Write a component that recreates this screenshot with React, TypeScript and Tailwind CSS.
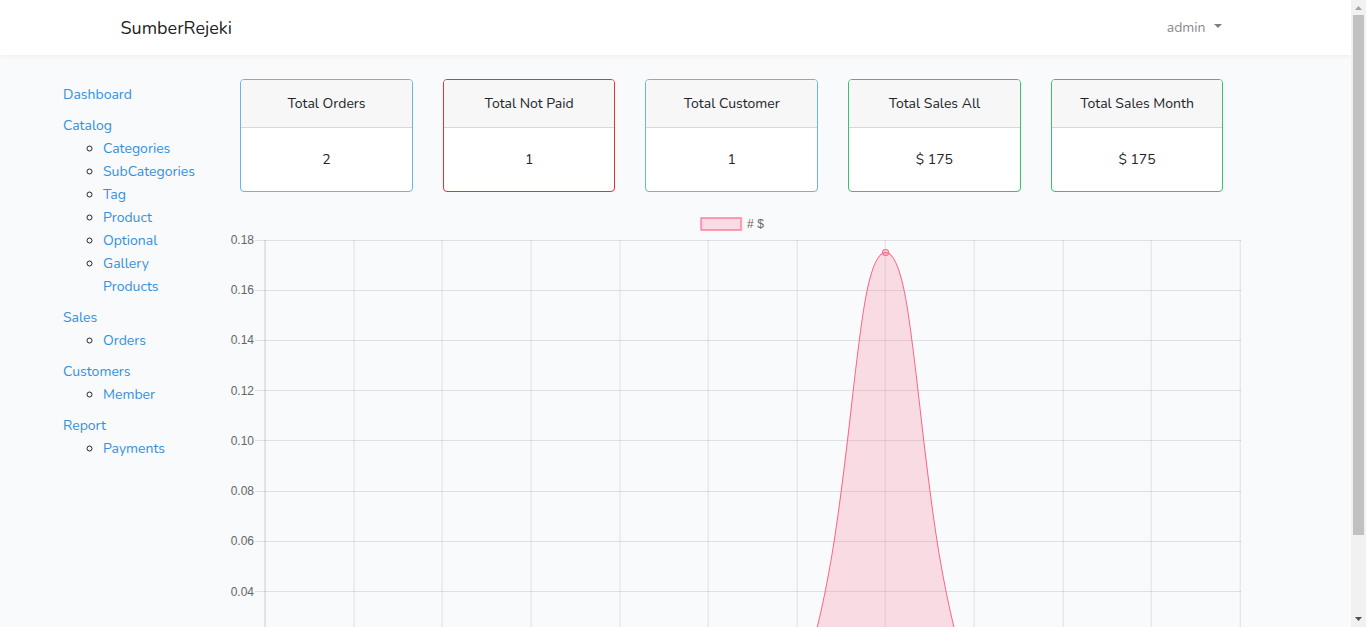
type Section = { title: string; items: string[] };

const sections: Section[] = [
  { title: "Dashboard", items: [] },
  {
    title: "Catalog",
    items: ["Categories", "SubCategories", "Tag", "Product", "Optional", "Gallery Products"],
  },
  { title: "Sales", items: ["Orders"] },
  { title: "Customers", items: ["Member"] },
  { title: "Report", items: ["Payments"] },
];

const stats = [
  { title: "Total Orders", value: "2", border: "border-[#6cb2eb]" },
  { title: "Total Not Paid", value: "1", border: "border-[#e3342f]" },
  { title: "Total Customer", value: "1", border: "border-[#6cb2eb]" },
  { title: "Total Sales All", value: "$ 175", border: "border-[#38c172]" },
  { title: "Total Sales Month", value: "$ 175", border: "border-[#38c172]" },
];

function Navbar() {
  return (
    <header className="relative h-[55px] bg-white shadow-[0_2px_4px_rgba(0,0,0,0.04)]">
      <div className="mx-auto flex h-full max-w-[1140px] items-center justify-between px-[15px]">
        <a href="#" className="text-lg text-black/90">
          SumberRejeki
        </a>
        <button type="button" className="mr-[9px] flex items-center gap-2 text-sm text-black/50">
          admin
          <span className="mb-1 border-x-4 border-t-4 border-x-transparent border-t-black/50" />
        </button>
      </div>
    </header>
  );
}

function Sidebar() {
  return (
    <nav className="w-1/6 shrink-0 pl-[63px] pr-5 pt-1 text-sm leading-[23px]">
      <ul className="flex flex-col gap-2">
        {sections.map((section) => (
          <li key={section.title}>
            <a href="#" className="text-[#3490dc]">
              {section.title}
            </a>
            {section.items.length > 0 && (
              <ul className="list-[circle] pl-10">
                {section.items.map((item) => (
                  <li key={item}>
                    <a href="#" className="text-[#3490dc]">
                      {item}
                    </a>
                  </li>
                ))}
              </ul>
            )}
          </li>
        ))}
      </ul>
    </nav>
  );
}

function StatCard({ title, value, border }: { title: string; value: string; border: string }) {
  return (
    <section className={`rounded border bg-white text-center text-sm leading-[23px] ${border}`}>
      <h2 className="rounded-t-[3px] border-b border-black/[0.125] bg-[#f7f7f7] py-3">{title}</h2>
      <p className="p-5">{value}</p>
    </section>
  );
}

const plot = { left: 40, right: 1015, top: 32, bottom: 484 };
const columns = 11;
const maxValue = 0.18;
const tickStep = 0.02;
const values = [0, 0, 0, 0, 0, 0, 0, 0.175, 0, 0, 0, 0];
const ticks = Array.from({ length: 10 }, (_, i) => maxValue - i * tickStep);

const xAt = (i: number) => plot.left + ((plot.right - plot.left) * i) / columns;
const yAt = (v: number) => plot.bottom - ((plot.bottom - plot.top) * v) / maxValue;
const snap = (n: number) => Math.floor(n) + 0.5;

/* Spline with tension 0.4; control points are clamped to the plot area. */
function splinePath() {
  const pts = values.map((v, i) => ({ x: xAt(i), y: yAt(v) }));
  const clampY = (y: number) => Math.min(plot.bottom, Math.max(plot.top, y));
  const controls = pts.map((p, i) => {
    const prev = pts[i - 1] ?? p;
    const next = pts[i + 1] ?? p;
    const d1 = Math.hypot(p.x - prev.x, p.y - prev.y);
    const d2 = Math.hypot(next.x - p.x, next.y - p.y);
    const a = (0.4 * d1) / (d1 + d2);
    const b = (0.4 * d2) / (d1 + d2);
    return {
      inX: p.x - a * (next.x - prev.x),
      inY: clampY(p.y - a * (next.y - prev.y)),
      outX: p.x + b * (next.x - prev.x),
      outY: clampY(p.y + b * (next.y - prev.y)),
    };
  });
  return pts
    .map((p, i) =>
      i === 0
        ? `M${p.x} ${p.y}`
        : `C${controls[i - 1].outX} ${controls[i - 1].outY} ${controls[i].inX} ${controls[i].inY} ${p.x} ${p.y}`,
    )
    .join(" ");
}

function SalesChart() {
  const line = splinePath();
  return (
    <svg
      role="img"
      aria-label="Sales"
      viewBox="0 0 1017 508"
      className="w-full font-['Liberation_Sans',Arial,sans-serif] text-xs"
    >
      <rect x="476" y="10" width="40" height="12" fill="#ff6384" fillOpacity="0.2" stroke="#ff6384" strokeOpacity="0.6" strokeWidth="2" />
      <text x="522" y="20" fill="#666">
        # $
      </text>
      {ticks.map((tick) => (
        <g key={tick}>
          <line x1="30" x2={plot.right + 1} y1={snap(yAt(tick))} y2={snap(yAt(tick))} stroke="#000" strokeOpacity="0.1" />
          <text x="29" y={yAt(tick) + 4} textAnchor="end" fill="#666">
            {Math.abs(tick).toFixed(2)}
          </text>
        </g>
      ))}
      {values.map((_, i) => (
        <line
          key={i}
          x1={Math.round(xAt(i))}
          x2={Math.round(xAt(i))}
          y1={plot.top}
          y2={plot.bottom + 10}
          stroke="#000"
          strokeOpacity={i === 0 ? 0.18 : 0.1}
        />
      ))}
      <path d={`${line} L${plot.right} ${plot.bottom} L${plot.left} ${plot.bottom} Z`} fill="#ff6384" fillOpacity="0.2" />
      <path d={line} fill="none" stroke="#ff6384" />
      {values.map((v, i) => (
        <circle key={i} cx={xAt(i)} cy={yAt(v)} r="3" fill="#ff6384" fillOpacity="0.2" stroke="#ff6384" />
      ))}
    </svg>
  );
}

function ScrollRail() {
  return (
    <div aria-hidden="true" className="flex w-[15px] shrink-0 flex-col items-center bg-[#f1f1f1]">
      <svg viewBox="0 0 15 15" className="h-[15px] w-full shrink-0">
        <path d="M4 10 7.500 6 11 10Z" fill="#a3a3a3" />
      </svg>
      <div className="min-h-0 w-[11px] grow-[520] basis-0 bg-[#c1c1c1]" />
      <div className="min-h-0 grow-[77] basis-0" />
      <svg viewBox="0 0 15 15" className="h-[15px] w-full shrink-0">
        <path d="M4 5H11L7.500 9Z" fill="#505050" />
      </svg>
    </div>
  );
}

export default function App() {
  return (
    <div className="flex h-screen bg-[#f8fafc] font-['Nunito','Open_Sans',sans-serif] text-[#212529]">
      <div className="min-w-0 grow overflow-y-auto [scrollbar-width:none]">
        <Navbar />
        <main className="flex pt-6">
          <Sidebar />
          <div className="w-3/4">
            <div className="grid grid-cols-5 gap-[30px] px-[15px]">
              {stats.map((stat) => (
                <StatCard key={stat.title} {...stat} />
              ))}
            </div>
            <div className="-mr-1 mt-4">
              <SalesChart />
            </div>
          </div>
        </main>
      </div>
      <ScrollRail />
    </div>
  );
}
